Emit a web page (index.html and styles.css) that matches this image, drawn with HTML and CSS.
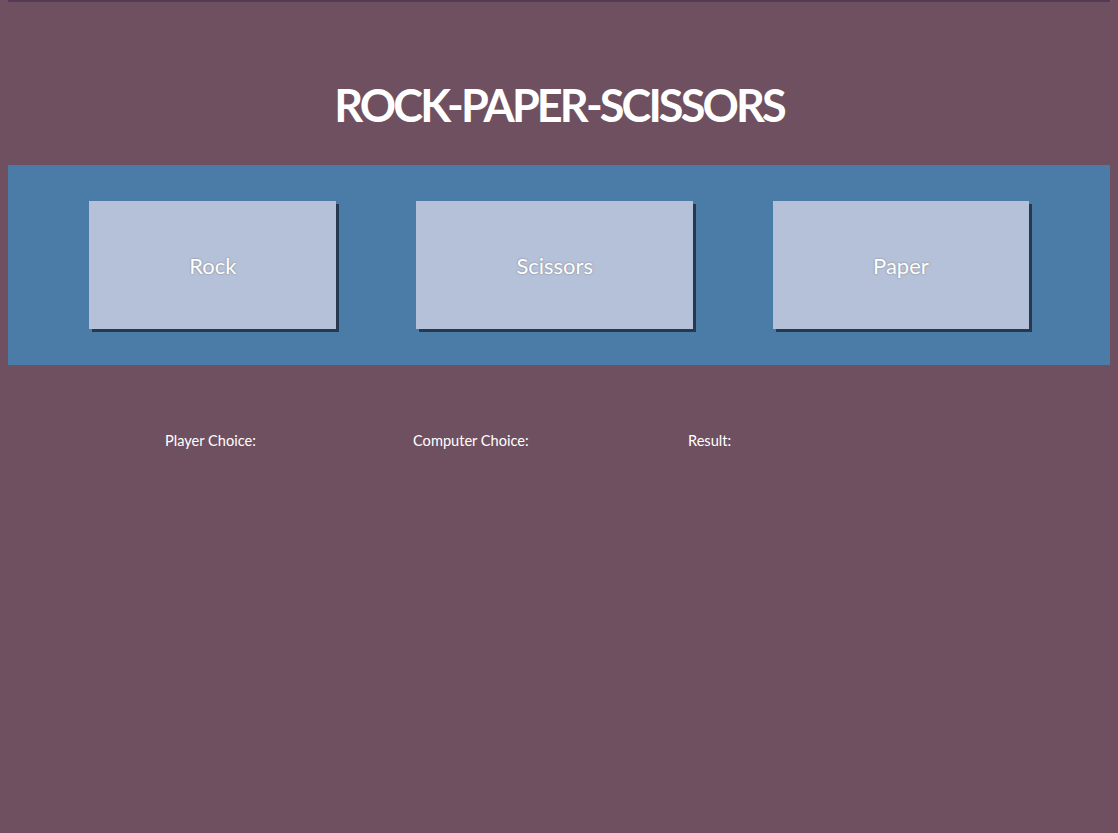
FILE: index.html
```html
<!DOCTYPE html>
<html>
<head>
<meta charset="utf-8">
<link rel="stylesheet" href="styles.css">
</head>
<body>
<div class="topline"></div>
<h1 class="title">ROCK-PAPER-SCISSORS</h1>
<div class="band">
  <button class="choice">Rock</button>
  <button class="choice">Scissors</button>
  <button class="choice">Paper</button>
</div>
<div class="results">
  <div class="label">Player Choice:</div>
  <div class="label">Computer Choice:</div>
  <div class="label">Result:</div>
</div>
</body>
</html>
```
FILE: styles.css
```css
html, body {
  background: #6f5060;
}
body {
  margin: 0 8px;
  font-family: Lato, "Open Sans", sans-serif;
  color: #fff;
}
.topline {
  height: 2px;
  background: #553a58;
}
.title {
  margin: 0;
  padding-top: 80px;
  height: 85px;
  box-sizing: border-box;
  text-align: center;
  font-size: 45px;
  font-weight: 700;
  line-height: 46px;
  color: #fff;
  letter-spacing: -2.9px;
}
.band {
  margin-top: 78px;
  height: 200px;
  background: #4b7ca7;
  display: flex;
  justify-content: center;
  align-items: center;
}
.choice {
  margin: 0 40px;
  height: 128px;
  padding: 0 100px;
  border: none;
  background: #b5c1d9;
  color: #fff;
  font-family: Lato, "Open Sans", sans-serif;
  font-size: 22px;
  text-shadow: 0 0 2px #7a7a7a;
  box-shadow: 3px 3px 0 #26394f;
}
.results {
  display: grid;
  grid-template-columns: 248px 275px auto;
  padding-left: 157px;
  margin-top: 67px;
  font-size: 14.6px;
}
```
